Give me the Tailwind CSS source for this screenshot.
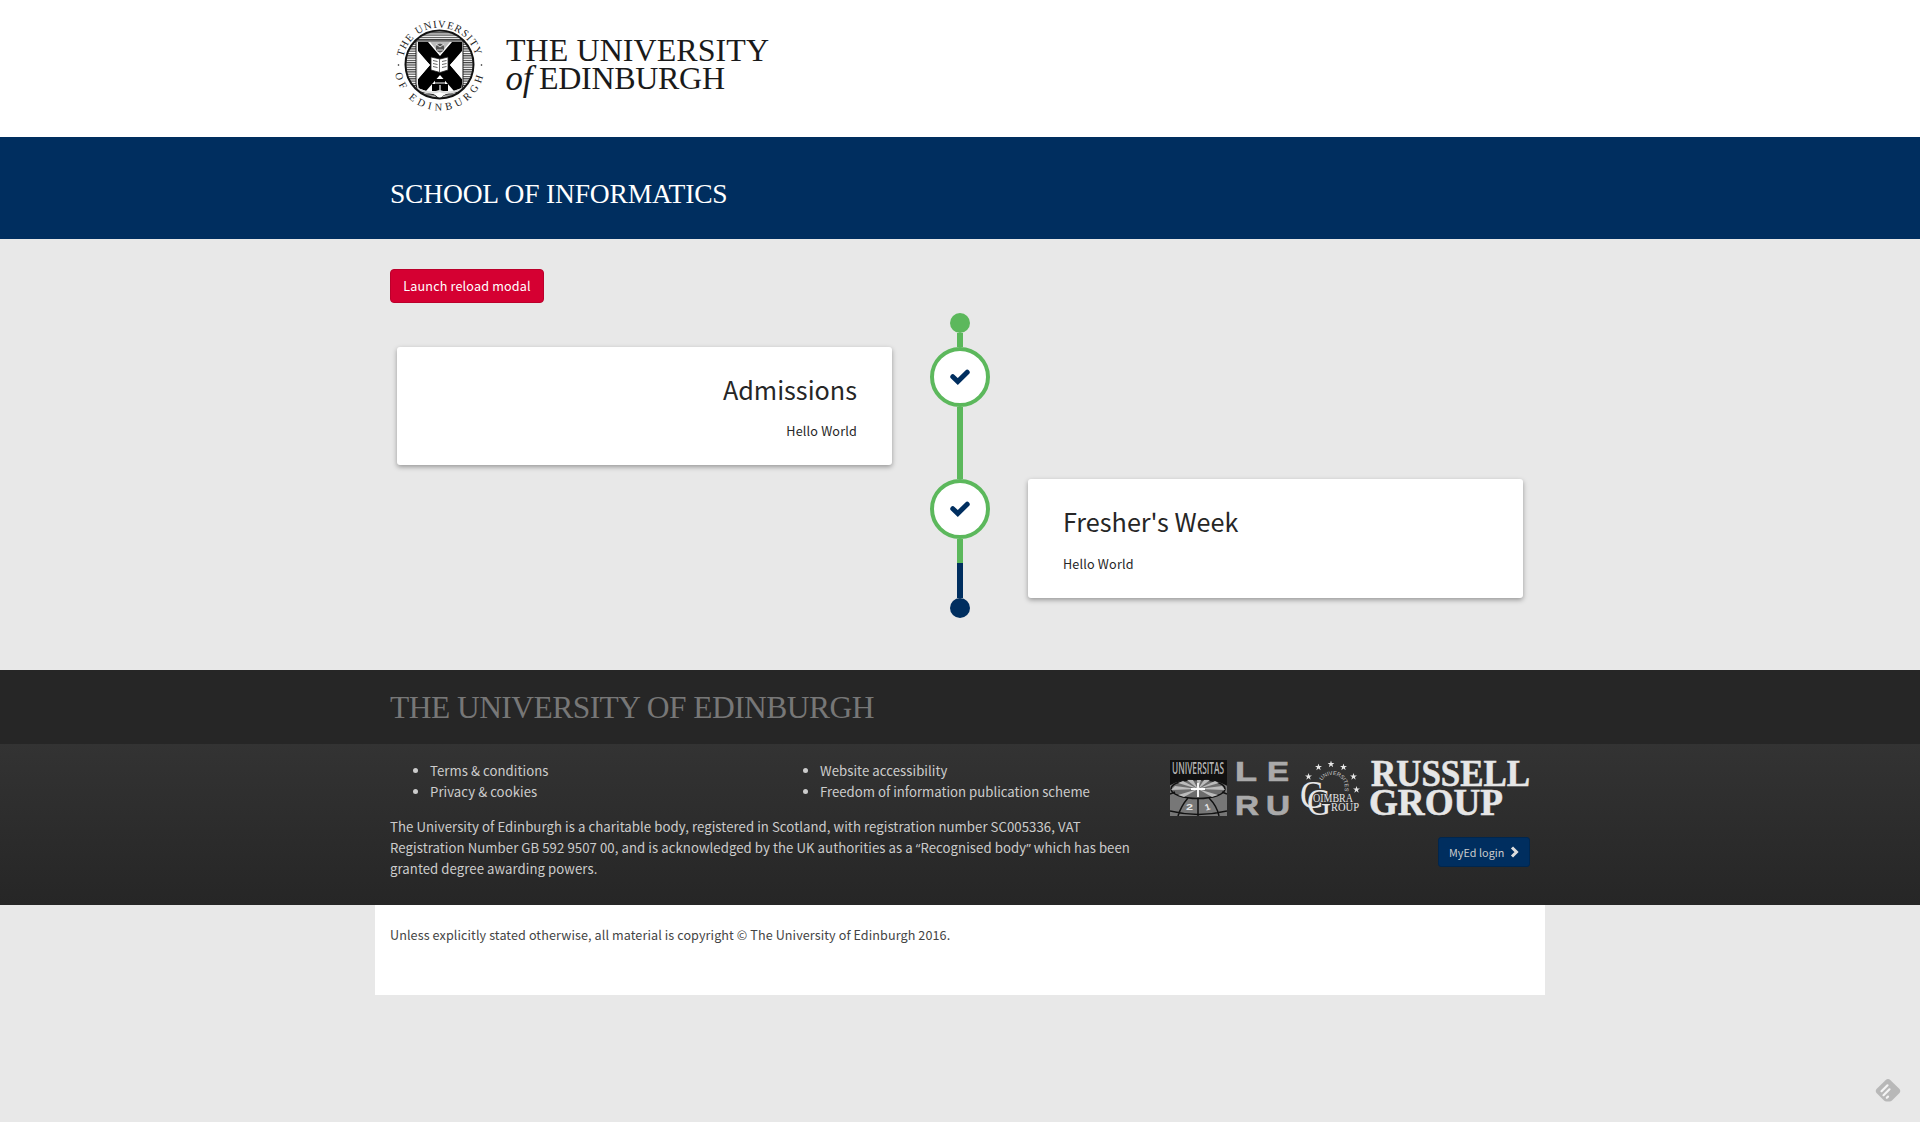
<!DOCTYPE html>
<html lang="en">
<head>
<meta charset="utf-8">
<title>School of Informatics</title>
<script src="https://cdn.jsdelivr.net/npm/@tailwindcss/browser@4"></script>
</head>
<body class="min-h-screen bg-[#e8e8e8] font-['Noto_Sans_CJK_SC',sans-serif] text-[12.6px] text-[#262626]">
<svg class="hidden">
  <symbol id="check" viewBox="0 0 20 18"><path d="M2.800 8.700 7.800 13.500 17.200 4.200" fill="none" stroke="#002e5f" stroke-width="5" stroke-linecap="round" stroke-linejoin="miter"/></symbol>
  <symbol id="star" viewBox="0 0 20 20"><path d="M10 0l2.400 7.200H20l-6.100 4.500 2.300 7.300L10 14.500 3.800 19l2.300-7.300L0 7.200h7.600z" fill="#e6e6e6"/></symbol>
</svg>

<header class="h-[137px] bg-white">
  <div class="mx-auto w-[1140px]">
    <svg class="block h-[137px] w-[400px]" viewBox="390 0 400 137" font-family="Liberation Serif, serif" fill="#1a1a1a">
      <defs>
        <clipPath id="disc"><circle cx="439.500" cy="64.500" r="33.500"/></clipPath>
        <pattern id="hatch" width="4" height="2.300" patternUnits="userSpaceOnUse"><rect width="4" height="1.200" fill="#444"/></pattern>
        <clipPath id="shield"><path d="M418 42h44v42q0 8-10 9-8 0-12 6-4-6-12-6-10-1-10-9z"/></clipPath>
        <path id="arcTop" d="M403.300 57A37 37 0 0 1 475.700 57"/>
        <path id="arcBottom" d="M394.900 71.500A45 45 0 0 0 484.100 71.500"/>
      </defs>
      <circle cx="439.500" cy="64.500" r="34" fill="#fff"/>
      <circle cx="439.500" cy="64.500" r="33.500" fill="url(#hatch)"/>
      <g clip-path="url(#disc)">
        <path d="M416 41h47v43q0 8-11 9-9 1-12.500 6-4-5-12-6-11.500-1-11.500-9z" fill="#eee" stroke="#222" stroke-width="1"/>
        <g clip-path="url(#shield)">
          <rect x="416" y="40" width="48" height="60" fill="#fff"/>
          <path d="M418 42h10l12 14 12-14h10v10L450 65l12 14v9l-8 3-14-16-14 16-8-3v-9l12-14-12-13z" fill="#000"/>
          <path d="M430 42h20l-10 12z" fill="#bbb"/>
          <path d="M418 51v28l12-14z M462 51v28l-12-14z" fill="#fff"/>
        </g>
        <circle cx="440" cy="48" r="4.200" fill="#555"/><path d="M436 44l4 3 4-3M437 50h6" stroke="#ddd" fill="none"/>
        <path d="M432 91v-7h3v-5h10v5h3v7z" fill="#000"/><path d="M434 83h12M440 85v6" stroke="#fff" stroke-width="1.200"/>
        <path d="M417 89q15 6 22.500 2 8 4 22.500-2" fill="none" stroke="#ddd" stroke-width="2"/>
        <path d="M431 57l9 2 8-2v13l-8 2.500-9-2.500z" fill="#fff" stroke="#222" stroke-width=".8"/>
        <path d="M439.500 59v13M433 60.500l4.500 1M433 63.500l4.500 1M433 66.500l4.500 1M442 61.500l4.500-1M442 64.500l4.500-1M442 67.500l4.500-1" stroke="#555" stroke-width=".9"/>
      </g>
      <circle cx="439.500" cy="64.500" r="34" fill="none" stroke="#111" stroke-width="2"/>
      <g font-size="10.500" fill="#222">
        <text><textPath href="#arcTop" textLength="99" lengthAdjust="spacing">THE UNIVERSITY</textPath></text>
        <text><textPath href="#arcBottom" startOffset="2" textLength="122" lengthAdjust="spacing">OF EDINBURGH</textPath></text>
      </g>
      <circle cx="398.500" cy="65" r=".8"/><circle cx="481.500" cy="65" r=".8"/>
      <text x="506" y="60.500" font-size="32" textLength="263">THE UNIVERSITY</text>
      <text x="505.500" y="89.500" font-size="36" font-style="italic" textLength="27" lengthAdjust="spacingAndGlyphs">of</text>
      <text x="539" y="89" font-size="32" textLength="186">EDINBURGH</text>
    </svg>
  </div>
</header>

<div class="h-[102px] bg-[#002e5f] pt-[39px]">
  <h1 class="mx-auto w-[1140px] font-['Liberation_Serif',serif] text-[27.500px] leading-[36px] tracking-[-0.18px] text-white">SCHOOL OF INFORMATICS</h1>
</div>

<main class="mx-auto h-[431px] w-[1140px] pt-[30px]">
  <button class="block h-[34px] w-[154px] rounded-[4px] border border-[#bb002b] bg-[#d50032] text-center text-[12.6px] leading-[32px] tracking-[0.17px] text-white">Launch reload modal</button>
  <div class="mt-[10px] flex px-[7px]">
    <div class="w-[495px] pt-[34px]">
      <section class="h-[118px] rounded-[3px] bg-white px-[35px] pt-[27px] text-right shadow-[0_2px_5px_rgba(0,0,0,0.35)]">
        <h2 class="text-[25.2px] leading-[30px]">Admissions</h2>
        <p class="mt-[17px] leading-5 tracking-[0.18px]">Hello World</p>
      </section>
    </div>
    <div class="flex w-[136px] flex-col items-center">
      <span class="size-5 rounded-full bg-[#5cb85c]"></span>
      <span class="h-[14px] w-[6px] bg-[#5cb85c]"></span>
      <span class="flex size-[60px] items-center justify-center rounded-full border-4 border-[#5cb85c] bg-white"><svg class="h-[18px] w-5"><use href="#check"/></svg></span>
      <span class="h-[72px] w-[6px] bg-[#5cb85c]"></span>
      <span class="flex size-[60px] items-center justify-center rounded-full border-4 border-[#5cb85c] bg-white"><svg class="h-[18px] w-5"><use href="#check"/></svg></span>
      <span class="h-6 w-[6px] bg-[#5cb85c]"></span>
      <span class="h-[35px] w-[6px] bg-[#002e5f]"></span>
      <span class="size-5 rounded-full bg-[#002e5f]"></span>
    </div>
    <div class="w-[495px] pt-[166px]">
      <section class="h-[119px] rounded-[3px] bg-white px-[35px] pt-[27px] shadow-[0_2px_5px_rgba(0,0,0,0.35)]">
        <h2 class="text-[25.2px] leading-[30px]">Fresher's Week</h2>
        <p class="mt-[18px] leading-5 tracking-[0.18px]">Hello World</p>
      </section>
    </div>
  </div>
</main>

<footer>
  <div class="h-[74px] bg-[#262626] pt-[18px]">
    <h2 class="mx-auto w-[1140px] font-['Liberation_Serif',serif] text-[31.5px] leading-[40px] tracking-[-0.54px] text-[#777]">THE UNIVERSITY OF EDINBURGH</h2>
  </div>
  <div class="h-[161px] bg-linear-to-b from-[#333] to-[#262626]">
    <div class="mx-auto flex w-[1140px] pt-4 text-[13.2px] leading-[21px] tracking-[0.05px] text-[#ccc]">
      <div class="w-[780px]">
        <div class="grid grid-cols-2">
          <ul>
            <li class="flex items-center"><span class="mr-3 ml-[23px] size-[5px] rounded-full bg-[#ccc]"></span>Terms &amp; conditions</li>
            <li class="flex items-center"><span class="mr-3 ml-[23px] size-[5px] rounded-full bg-[#ccc]"></span>Privacy &amp; cookies</li>
          </ul>
          <ul>
            <li class="flex items-center"><span class="mr-3 ml-[23px] size-[5px] rounded-full bg-[#ccc]"></span>Website accessibility</li>
            <li class="flex items-center tracking-normal"><span class="mr-3 ml-[23px] size-[5px] rounded-full bg-[#ccc]"></span>Freedom of information publication scheme</li>
          </ul>
        </div>
        <p class="mt-[14px] whitespace-nowrap tracking-[0.06px]">The University of Edinburgh is a charitable body, registered in Scotland, with registration number SC005336, VAT<br>Registration Number GB 592 9507 00, and is acknowledged by the UK authorities as a <span class="font-['Open_Sans',sans-serif] leading-none">“</span>Recognised body<span class="font-['Open_Sans',sans-serif] leading-none">”</span> which has been<br>granted degree awarding powers.</p>
      </div>
      <div class="flex w-[360px] flex-col items-end">
        <svg class="block h-[57px] w-[360px] tracking-normal" viewBox="0 0 360 57" font-family="Liberation Serif, serif">
          <defs>
            <clipPath id="u21"><rect width="57" height="56"/></clipPath>
            <path id="coimbraArc" d="M151.800 20.800A12.500 12.500 0 0 1 173.600 33"/>
          </defs>
          <g clip-path="url(#u21)">
            <rect width="57" height="56" fill="#111"/>
            <text x="2" y="14" font-family="Open Sans, sans-serif" font-size="16" font-weight="600" fill="#b4b4b4" textLength="52" lengthAdjust="spacingAndGlyphs">UNIVERSITAS</text>
            <ellipse cx="28" cy="46" rx="44" ry="27" fill="#777"/>
            <ellipse cx="28" cy="29" rx="27" ry="9.500" fill="#6c6c6c" stroke="#111" stroke-width="1.500"/>
            <path d="M28 29 1 30 5 26zM28 29 8 23l5-2zM28 29 17 20h6zM28 29l-1-9h4zM28 29l6-9h6zM28 29l17-8 4 2zM28 29l24-3 3 4zM28 29 8 35l6 2zM28 29l20 6-6 2z" fill="#bbb"/>
            <path d="M28 23v14M21 29h14" stroke="#fff" stroke-width="1.800"/>
            <g fill="none" stroke="#111" stroke-width="1.500"><path d="M28 38v18M18 38Q11 46 8 56M39 38q8 8 10 18M0 51q28 7 57 0M0 34l5-2M52 32l5 2"/></g>
            <g font-family="Liberation Sans, sans-serif" font-weight="700" font-size="9" fill="#e8e8e8"><text x="16" y="50" textLength="7" lengthAdjust="spacingAndGlyphs">2</text><text x="35" y="50" transform="rotate(-18 38 47)">1</text></g>
          </g>
          <g font-family="Liberation Sans, sans-serif" font-weight="700" font-size="27.500" fill="#aaa" stroke="#aaa" stroke-width=".7">
            <text x="65" y="21" textLength="22" lengthAdjust="spacingAndGlyphs">L</text>
            <text x="97" y="21" textLength="22" lengthAdjust="spacingAndGlyphs">E</text>
            <text x="65" y="54.500" textLength="24" lengthAdjust="spacingAndGlyphs">R</text>
            <text x="96" y="54.500" textLength="24" lengthAdjust="spacingAndGlyphs">U</text>
          </g>
          <g fill="#e6e6e6">
            <use href="#star" x="135" y="13" width="7" height="7"/><use href="#star" x="145" y="3.500" width="7" height="7"/><use href="#star" x="157.500" y=".5" width="7" height="7"/><use href="#star" x="170" y="3.500" width="7" height="7"/><use href="#star" x="180" y="13" width="7" height="7"/><use href="#star" x="183" y="26" width="7" height="7"/>
            <text font-family="Liberation Sans, sans-serif" font-size="5.500" fill="#ccc"><textPath href="#coimbraArc" textLength="36">UNIVERSITES</textPath></text>
            <text x="130" y="47.500" font-size="39" textLength="23" lengthAdjust="spacingAndGlyphs">C</text>
            <text x="137" y="54.500" font-size="38" textLength="24" lengthAdjust="spacingAndGlyphs">G</text>
            <text x="143" y="42" font-size="12.500" textLength="40" lengthAdjust="spacingAndGlyphs" stroke="#2e2e2e" stroke-width="1.500" paint-order="stroke">OIMBRA</text>
            <text x="161" y="50.500" font-size="12" textLength="28" lengthAdjust="spacingAndGlyphs">ROUP</text>
          </g>
          <g font-weight="700" font-size="37" fill="#e6e6e6" stroke="#e6e6e6" stroke-width=".6">
            <text x="201" y="25.500" textLength="159" lengthAdjust="spacingAndGlyphs">RUSSELL</text>
            <text x="199" y="55" textLength="134" lengthAdjust="spacingAndGlyphs">GROUP</text>
          </g>
        </svg>
        <a class="mt-5 flex h-[30px] w-[92px] items-center rounded-[3px] border border-[#00264e] bg-[#002e5f] pl-[10px] text-[10.8px] whitespace-nowrap text-[#ccc]">MyEd login<svg class="ml-[5px] h-[12px] w-[9px]" viewBox="0 0 9 12"><path d="M2 1.500 6.500 6 2 10.500" fill="none" stroke="#ddd" stroke-width="3"/></svg></a>
      </div>
    </div>
  </div>
  <div class="mx-auto h-[90px] w-[1170px] bg-white px-[15px] pt-5 leading-5 tracking-[0.09px] text-[#444]">Unless explicitly stated otherwise, all material is copyright © The University of Edinburgh 2016.</div>
</footer>

<svg class="fixed right-[19px] bottom-[20px] h-[23px] w-[26px]" viewBox="0 0 26 23">
  <path d="M10.500 1.200Q13-1 15.500 1.200L24.500 10Q26 12 24.500 14L17 21.500Q16 22.500 14.500 22.500h-3Q10 22.500 9 21.500L1.500 14Q0 12 1.500 10z" fill="#b8b8b8"/>
  <path d="M6.500 12.200 12.500 6.300M8.500 16.200 14.500 10.300M11.800 18.800l1.200-1.200" stroke="#f4f4f4" stroke-width="2.200" stroke-linecap="round"/>
</svg>
</body>
</html>
